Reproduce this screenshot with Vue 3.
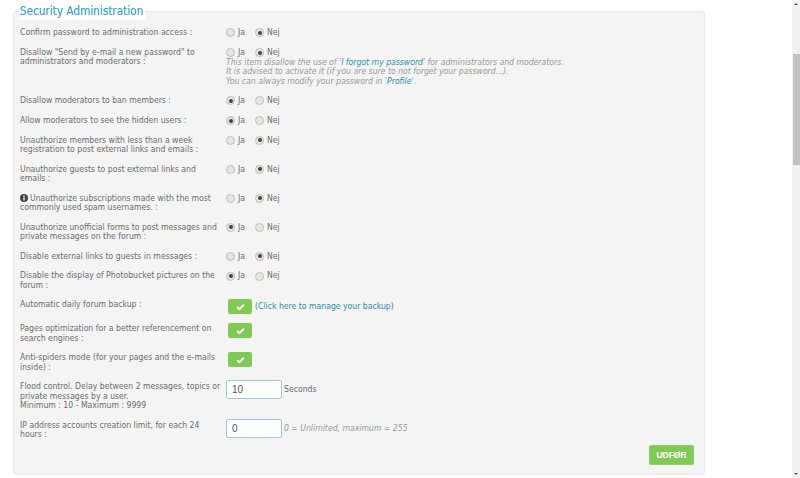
<template>
  <div class="page">
    <div class="content">
      <form class="panel" @submit.prevent>
        <div class="legend">Security Administration</div>

        <div v-for="row in rows" :key="row.label" class="row">
          <div class="label">
            <svg v-if="row.info" class="info" viewBox="0 0 16 16">
              <circle cx="8" cy="8" r="8" fill="#444" />
              <rect x="6.6" y="6.8" width="2.8" height="6" fill="#f4f4f4" />
              <rect x="6.6" y="3" width="2.8" height="2.6" fill="#f4f4f4" />
            </svg>
            <span v-html="row.label"></span>
          </div>
          <div class="field">
            <div v-if="row.radio" class="radios">
              <label class="radio"><span class="dot" :class="{ on: row.radio === 'ja' }"></span>Ja</label>
              <label class="radio"><span class="dot" :class="{ on: row.radio === 'nej' }"></span>Nej</label>
            </div>
            <div v-if="row.hint" class="hint">
              This item disallow the use of '<a>I forgot my password</a>' for administrators and moderators.<br />
              It is advised to activate it (if you are sure to not forget your password...).<br />
              You can always modify your password in '<a>Profile</a>'.
            </div>
            <div v-if="row.toggle" class="toggle-line">
              <span class="toggle">
                <svg viewBox="0 0 12 10" class="check"><path d="M1.5 5.2 4.5 8 10.5 2" fill="none" stroke="#fff" stroke-width="2.4" /></svg>
              </span>
              <span v-if="row.link" class="backup">(<a>Click here to manage your backup</a>)</span>
            </div>
            <div v-if="row.input" class="input-line">
              <input class="num" :value="row.input" />
              <span v-if="row.unit" class="unit">{{ row.unit }}</span>
              <em v-if="row.note" class="note">{{ row.note }}</em>
            </div>
          </div>
        </div>

        <div class="actions">
          <button class="submit">UDFØR</button>
        </div>
      </form>
    </div>

    <div class="scrollbar">
      <span class="arrow up"></span>
      <div class="track"><div class="thumb"></div></div>
      <span class="arrow down"></span>
    </div>
  </div>
</template>

<script setup>
const rows = [
  { label: 'Confirm password to administration access :', radio: 'nej' },
  { label: 'Disallow "Send by e-mail a new password" to administrators and moderators :', radio: 'nej', hint: true },
  { label: 'Disallow moderators to ban members :', radio: 'ja' },
  { label: 'Allow moderators to see the hidden users :', radio: 'ja' },
  { label: 'Unauthorize members with less than a week registration to post external links and emails :', radio: 'nej' },
  { label: 'Unauthorize guests to post external links and emails :', radio: 'nej' },
  { label: 'Unauthorize subscriptions made with the most commonly used spam usernames. :', radio: 'nej', info: true },
  { label: 'Unauthorize unofficial forms to post messages and private messages on the forum :', radio: 'ja' },
  { label: 'Disable external links to guests in messages :', radio: 'nej' },
  { label: 'Disable the display of Photobucket pictures on the forum :', radio: 'ja' },
  { label: 'Automatic daily forum backup :', toggle: true, link: true },
  { label: 'Pages optimization for a better referencement on search engines :', toggle: true },
  { label: 'Anti-spiders mode (for your pages and the e-mails inside) :', toggle: true },
  { label: 'Flood control. Delay between 2 messages, topics or private messages by a user.<br>Minimum : 10 - Maximum : 9999', input: '10', unit: 'Seconds' },
  { label: 'IP address accounts creation limit, for each 24 hours :', input: '0', note: '0 = Unlimited, maximum = 255' }
]
</script>

<style>
html, body {
  margin: 0;
  overflow: hidden;
  background: #fff;
}
</style>

<style scoped>
.page {
  display: flex;
  width: 800px;
  height: 478px;
  overflow: hidden;
  font-family: "DejaVu Sans Condensed", "DejaVu Sans", Verdana, sans-serif;
  font-stretch: condensed;
  font-size: 8.6px;
  color: #6c6c6c;
  filter: blur(0.3px);
}

.content {
  flex: 1;
  padding: 11px 0 0 13px;
}

.panel {
  width: 692px;
  height: 464px;
  box-sizing: border-box;
  padding: 16px 6px 0 6px;
  background: #f4f4f4;
  border: 1px solid #e8e8e8;
  border-radius: 3px;
  position: relative;
}

.legend {
  position: absolute;
  top: -10px;
  left: 6px;
  padding-right: 2px;
  background: #fff;
  color: #3ba3d8;
  font-size: 11.7px;
  font-weight: 400;
  line-height: 18px;
  -webkit-text-stroke: 0.2px #3ba3d8;
}

.row {
  display: grid;
  grid-template-columns: 206px 1fr;
  line-height: 9.5px;
  padding-bottom: 10px;
}

.label {
  padding-right: 4px;
}

.info {
  width: 8px;
  height: 8px;
  vertical-align: -1px;
  margin-right: 2px;
}

.radios {
  display: flex;
  gap: 10px;
  height: 9.75px;
}

.radio {
  display: flex;
  align-items: center;
  gap: 3px;
}

.dot {
  width: 7px;
  height: 7px;
  border: 1px solid #bbb;
  border-radius: 50%;
  background: #e6e6e6;
  position: relative;
}

.dot.on::after {
  content: "";
  position: absolute;
  inset: 1.5px;
  border-radius: 50%;
  background: #444;
}

.hint {
  font-style: italic;
  color: #999;
}

.hint a,
.backup a {
  color: #2c8fa8;
}

.toggle-line {
  display: flex;
  align-items: center;
  gap: 3px;
  padding-left: 2px;
  margin-top: -1px;
}

.toggle {
  display: flex;
  align-items: center;
  justify-content: center;
  width: 24px;
  height: 15px;
  background: #7fc955;
  border-radius: 2px;
}

.check {
  width: 9px;
  height: 8px;
}

.input-line {
  display: flex;
  align-items: center;
  gap: 2px;
  margin-top: -2px;
}

.num {
  width: 56px;
  height: 19px;
  box-sizing: border-box;
  padding: 0 5px;
  border: 1px solid #9cc9e2;
  border-radius: 2px;
  background: #fff;
  font-family: "Liberation Sans", Arial, sans-serif;
  font-size: 10px;
  color: #555;
  outline: none;
}

.note {
  color: #999;
}

.actions {
  position: absolute;
  right: 10px;
  bottom: 9px;
}

.submit {
  display: block;
  width: 45px;
  height: 20px;
  padding: 0;
  border: 1px solid #8fd06a;
  border-radius: 2px;
  background: #7fc955;
  color: #fff;
  font-family: "Liberation Sans", Arial, sans-serif;
  font-size: 8.5px;
  font-weight: 700;
}

.scrollbar {
  width: 8px;
  background: #f1f1f1;
  display: flex;
  flex-direction: column;
}

.track {
  flex: 1;
  padding-top: 46px;
  padding-left: 1px;
}

.thumb {
  height: 111px;
  background: #c1c1c1;
}

.arrow {
  height: 8px;
  flex: none;
  position: relative;
}

.arrow::after {
  content: "";
  position: absolute;
  left: 2px;
  border-left: 2px solid transparent;
  border-right: 2px solid transparent;
}

.arrow.up::after {
  top: 3px;
  border-bottom: 2px solid #505050;
}

.arrow.down::after {
  top: 3px;
  border-top: 2px solid #505050;
}
</style>
